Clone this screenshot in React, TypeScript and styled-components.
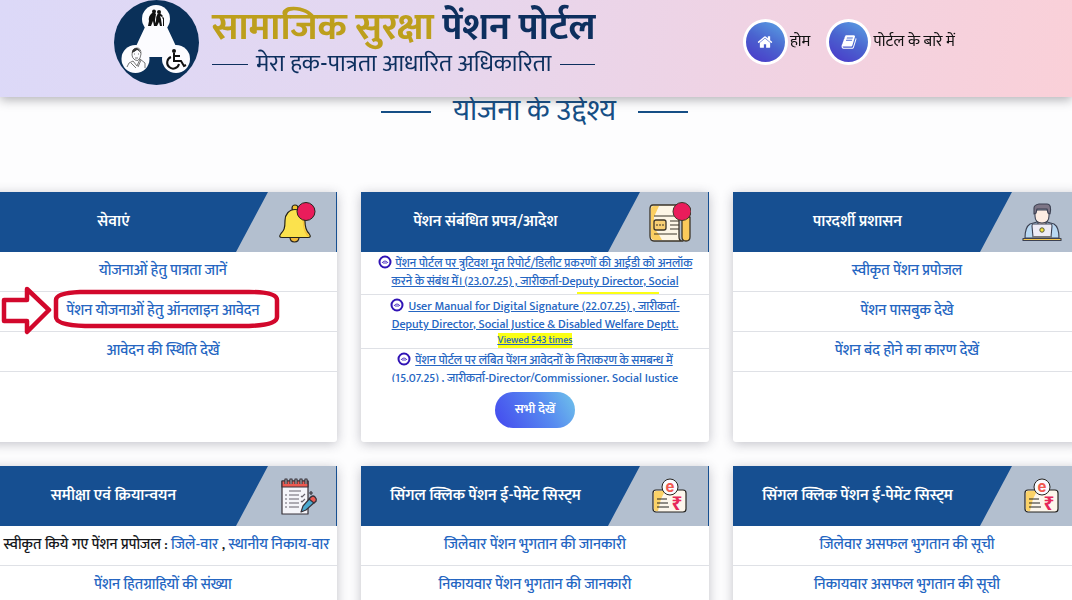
import React from "react";
import styled, { createGlobalStyle } from "styled-components";

const GlobalStyle = createGlobalStyle`
  * { box-sizing: border-box; }
  body {
    margin: 0;
    background: #fdfdfe;
    color: #16181c;
    font: 16px/24px "Mukta", "Noto Sans Devanagari", "Noto Sans", sans-serif;
    overflow-x: hidden;
  }
  a { color: #2566c2; text-decoration: none; }
`;

const Header = styled.header`
  position: sticky;
  top: 0;
  z-index: 5;
  display: flex;
  align-items: flex-start;
  justify-content: space-between;
  height: 97px;
  padding: 0 117px 0 114px;
  background: linear-gradient(100deg, #dcd9f8 0%, #e4d7f0 35%, #efd3e4 68%, #fad0d8 100%);
  box-shadow: 0 3px 10px rgba(40, 40, 50, 0.35);
`;

const Brand = styled.a`
  display: flex;
  gap: 13px;
`;

const BrandText = styled.span`
  display: flex;
  flex-direction: column;
  padding-top: 8px;
`;

const BrandName = styled.strong`
  color: #0d2f5e;
  font-size: 38px;
  line-height: 40px;
  font-weight: 700;
  white-space: nowrap;
`;

const Gold = styled.span`
  color: #bd9f1c;
`;

const Tagline = styled.span`
  display: flex;
  align-items: center;
  gap: 8px;
  color: #0d2f5e;
  font-size: 24px;
  line-height: 32px;
  white-space: nowrap;
  &::before,
  &::after {
    content: "";
    flex: 1;
    height: 1px;
    background: #0d2f5e;
  }
`;

const Nav = styled.nav`
  display: flex;
  gap: 16px;
  padding-top: 19px;
`;

const NavLink = styled.a`
  display: flex;
  align-items: center;
  gap: 2px;
  color: #111;
  line-height: 26px;
  white-space: nowrap;
`;

const NavBadge = styled.span`
  display: grid;
  place-items: center;
  width: 45px;
  height: 46px;
  border: 3px solid #fff;
  border-radius: 50%;
  background: linear-gradient(30deg, #4a35c8, #4a63cf 50%, #5aa4e4);
  svg { width: 16px; height: 16px; fill: #fff; }
`;

const SectionTitle = styled.h1`
  display: flex;
  align-items: center;
  justify-content: center;
  gap: 22px;
  margin: -8px 0 58px;
  padding-right: 3px;
  color: #164f86;
  font-size: 30px;
  line-height: 45px;
  font-weight: 400;
  &::before,
  &::after {
    content: "";
    width: 50px;
    height: 2px;
    background: #164f86;
  }
`;

const Grid = styled.main`
  display: grid;
  grid-template-columns: repeat(3, minmax(0, 1fr));
  gap: 24px;
  margin: 0 -9px 24px -11px;
`;

const Card = styled.section`
  min-height: 250px;
  background: #fff;
  border-radius: 3px;
  box-shadow: 0 2px 12px rgba(40, 40, 60, 0.28);
`;

const CardHead = styled.div`
  display: flex;
  height: 60px;
  padding-right: 1px;
  background: #164f91;
`;

const CardTitle = styled.h2`
  flex: 1;
  margin: 0;
  padding-left: 2px;
  color: #fff;
  font-size: 16px;
  line-height: 60px;
  font-weight: 600;
  text-align: center;
  white-space: nowrap;
`;

const IconPanel = styled.div`
  display: grid;
  place-items: center;
  width: 100px;
  padding: 2px 0 0 24px;
  background: #b3bfcf;
  clip-path: polygon(32px 0, 100% 0, 100% 100%, 0 100%);
  svg { width: 42px; height: 42px; }
`;

const List = styled.ul`
  margin: 0;
  padding: 0;
  list-style: none;
`;

const Row = styled.li`
  position: relative;
  height: 40px;
  border-bottom: 1px solid #dfe1e6;
  font-size: 15px;
  font-weight: 500;
  line-height: 38px;
  text-align: center;
  white-space: nowrap;
`;

const SplitRow = styled(Row)`
  padding-left: 7px;
`;

const ArrowMark = styled.svg`
  position: absolute;
  left: 12px;
  top: -9px;
  width: 280px;
  height: 52px;
  pointer-events: none;
`;

const Notices = styled.ul`
  height: 130px;
  margin: 0;
  padding: 0;
  overflow: hidden;
  list-style: none;
`;

const Notice = styled.li<{ $short?: boolean }>`
  height: ${(p) => (p.$short ? 43 : 54)}px;
  padding-top: 2px;
  overflow: hidden;
  border-bottom: 1px solid #dfe1e6;
  font-size: 12px;
  font-weight: 500;
  line-height: 18px;
  text-align: center;
  white-space: nowrap;
  a { text-decoration: underline; }
  svg { width: 14px; height: 14px; margin-right: 4px; vertical-align: -2px; }
`;

const Viewed = styled.span`
  display: table;
  margin: 0 auto;
  background: #fbff14;
  font-size: 10px;
  line-height: 15px;
  text-decoration: underline;
`;

const ViewedEdge = styled.span`
  display: block;
  width: 82px;
  height: 2px;
  margin: 2px 0 0 216px;
  background: #fbff14;
`;

const AllButton = styled.button`
  display: block;
  width: 80px;
  height: 36px;
  margin: 10px auto 0;
  padding: 0 0 3px;
  border: 0;
  border-radius: 18px;
  background: linear-gradient(60deg, #4348ee, #578af0 60%, #70c4ea);
  color: #fff;
  font: 600 13px/20px "Mukta", "Noto Sans Devanagari", "Noto Sans", sans-serif;
`;

const Logo = () => (
  <svg width="85" height="85" viewBox="0 0 85 85" aria-hidden="true">
    <circle cx="42.500" cy="42.500" r="42.500" fill="#0a3059" />
    <path d="M31 27H53L67 57H17Z" fill="#fcfcff" />
    <g fill="#fcfcff">
      <circle cx="42" cy="19" r="14" />
      <circle cx="21.500" cy="59" r="14" />
      <circle cx="62" cy="59" r="14" />
    </g>
    <g fill="#111">
      <circle cx="40" cy="11.500" r="2" />
      <circle cx="45" cy="12" r="2" />
      <path d="M38 13q-4 3-3 8l-1 5h3l2-5 1 5h2l-1-6 1-6-2-2zM43.500 14q-2 3-1.500 7l-1 5h2l2-4 1 4h2l-1-7-1-3 2 1 1-1-3-3z" />
      <path d="M48 18q2-1 1.500 1V26" fill="none" stroke="#111" />
    </g>
    <g fill="none" stroke="#111" strokeWidth="2">
      <path d="M60 53v8h7l3 5 2-1M60 56h6" />
      <path d="M57 57a6 6 0 1 0 8 7" />
    </g>
    <circle cx="60" cy="51" r="2" fill="#111" />
    <g fill="none" stroke="#555" strokeWidth="0.800">
      <path d="M18 55q0-7 5-7 4 0 4 6l-1 4q-2 4-5 2-3-2-3-5ZM18 52q3 0 5-3l4 4M13 67q1-5 6-6l4 5 3-7 5 4v5M17 63l5 5M20 54h1M24 54h1M21 58h3M27 60l-3 7" />
    </g>
    <path d="M18 53q0-5 5-5l4 3-4-1z" fill="#333" />
  </svg>
);

const HomeIcon = () => (
  <svg viewBox="0 0 1664 1792" aria-hidden="true">
    <path d="M1408 992v480q0 26-19 45t-45 19h-384v-384h-256v384h-384q-26 0-45-19t-19-45v-480q0-1 .5-3t.5-3l575-474 575 474q1 2 1 6zm223-69l-62 74q-8 9-21 11h-3q-13 0-21-7l-692-577-692 577q-12 8-24 7-13-2-21-11l-62-74q-8-10-7-23.500t11-21.500l719-599q32-26 76-26t76 26l244 204v-195q0-14 9-23t23-9h192q14 0 23 9t9 23v408l219 182q10 8 11 21.500t-7 23.500z" />
  </svg>
);

const BookIcon = () => (
  <svg viewBox="0 0 1664 1792" aria-hidden="true">
    <path d="M1639 478q40 57 18 129l-275 906q-19 64-76.500 107.500t-122.500 43.500h-923q-77 0-148.500-53.500t-99.500-131.500q-24-67-2-127 0-4 3-27t4-37q1-8-3-21.500t-3-19.500q2-11 8-21t16.500-23.500 16.500-23.500q23-38 45-91.500t30-91.500q3-10 .5-30t-.5-28q3-11 17-28t17-23q21-36 42-92t25-90q1-9-2.500-32t.5-28q4-13 22-30.500t22-22.500q19-26 42.500-84.500t27.500-96.500q1-8-3-25.500t-2-26.500q2-8 9-18t18-23 17-21q8-12 16.500-30.500t15-35 16-36 19.500-32 26.500-23.500 36-11.500 47.500 5.500l-1 3q38-9 51-9h761q74 0 114 56t18 130l-274 906q-36 119-71.500 153.500t-128.500 34.500h-869q-27 0-38 15-11 16-1 43 24 70 144 70h923q29 0 56-15.500t35-41.500l300-987q7-22 5-57 38 15 59 43zm-1064 2q-4 13 2 22.500t20 9.500h608q13 0 25.500-9.500t16.500-22.500l21-64q4-13-2-22.500t-20-9.500h-608q-13 0-25.500 9.500t-16.500 22.500zm-83 256q-4 13 2 22.500t20 9.500h608q13 0 25.500-9.500t16.500-22.500l21-64q4-13-2-22.500t-20-9.500h-608q-13 0-25.500 9.500t-16.500 22.500z" />
  </svg>
);

const BellIcon = () => (
  <svg viewBox="0 0 42 42" aria-hidden="true">
    <g stroke="#25231c" strokeWidth="1.2" strokeLinejoin="round">
      <circle cx="18" cy="6" r="3" fill="#f2c531" />
      <path d="M13 35q0 5 4.500 5t4.500-5z" fill="#f2b93b" />
      <path d="M18 7.500c-6 0-10 5-10 11 0 8-1 10-4 13q-3 4 1 4h26q4 0 1-4c-3-3-4-6-4-12 0-7-4-12-10-12Z" fill="#fbe24d" />
    </g>
    <path d="M23 13q3 3 3 9t4 12h1q2 0 0-2c-3-3-4-6-4-12 0-5-2-7-4-7Z" fill="#f7c23c" />
    <circle cx="29" cy="9.500" r="9" fill="#ea1c5b" stroke="#25231c" strokeWidth="1" />
  </svg>
);

const FormIcon = () => (
  <svg viewBox="0 0 42 42" aria-hidden="true">
    <g stroke="#3b3428" strokeWidth="1.300" strokeLinejoin="round">
      <path d="M4 3h29q-3 1-3 5v27q0 4 4 4H5q-4 0-4-5V7q0-4 3-4Z" fill="#fdf6e6" />
      <path d="M33 15h8v20q0 4-4 4t-4-4Z" fill="#fbc95a" />
    </g>
    <path d="M2 7q0-3 3-3h5L5 15v12q4 3 8 11H6q-4 0-4-4Z" fill="#fbcf62" />
    <rect x="5" y="18" width="12" height="10" rx="2" fill="#f8cf73" stroke="#3b3428" strokeWidth="1.300" />
    <path d="M5 14h20M21 19h9M21 23h9M21 27h9M5 32h23M7 23h2M10 23h2M13 23h2" stroke="#3b3428" strokeWidth="1.200" />
    <circle cx="33" cy="9.500" r="9" fill="#ea1c5b" stroke="#3b3428" />
  </svg>
);

const PersonIcon = () => (
  <svg viewBox="0 0 42 42" aria-hidden="true">
    <g stroke="#3c4152" strokeWidth="1.100" strokeLinejoin="round">
      <path d="M4 36q0-11 5-14l7-2h10l7 2q5 3 5 14Z" fill="#b9d8f2" />
      <path d="M17 17h8v6l-4 3-4-3Z" fill="#fbe1d0" />
      <path d="M14 8h14v6q0 7-7 7t-7-7Z" fill="#fdece2" />
      <path d="M13 12V6q0-3 5-4h8q5 0 3 10l-2-1-1-4H16l-1 4Z" fill="#7d7586" />
      <path d="M12 22h18q1 0 1 2l-1 11H12l-1-11q0-2 1-2Z" fill="#eeecf6" />
      <path d="M2 36.500h38v2H2Z" fill="#f8c84f" />
    </g>
    <path d="M12 34h19v2H12Z" fill="#77787c" />
    <circle cx="21" cy="28" r="2.200" fill="#f5e63c" stroke="#55563c" />
  </svg>
);

const NotepadIcon = () => (
  <svg viewBox="0 0 42 42" aria-hidden="true">
    <g stroke="#38323a" strokeWidth="1.200" strokeLinejoin="round">
      <path d="M5 5h26v33H5Z" fill="#f5f5fa" />
      <path d="M5 5h26v6H5Z" fill="#ec5a51" />
      <path d="M8 8V3h2v5M13 8V3h2v5M18 8V3h2v5M23 8V3h2v5M28 8V3h2v5" fill="#ddd" />
      <path d="M24 36l2-6 8-9 5 4-10 9Z" fill="#4ba9cf" />
      <path d="M34 21q2-2 4 0t1 4l-2 2-5-4Z" fill="#ec5a51" />
      <path d="M34 15v4M32 17h4" />
    </g>
    <path d="M12 15h12M8 19h2M12 19h10M8 23h2M12 23h10M8 27h2M12 27h10M8 31h2M12 31h10M24 20l1 1 3-3M24 25l1 1 3-3" stroke="#66636d" strokeWidth="1.200" fill="none" />
  </svg>
);

const PaymentIcon = () => (
  <svg viewBox="0 0 42 42" aria-hidden="true">
    <rect x="4" y="14" width="33" height="22" rx="3" fill="#fdf6ec" stroke="#25231f" strokeWidth="1.200" />
    <path d="M5 17q0-2 2-2h9l-4 8-3 12H7q-2 0-2-2Z" fill="#fbd268" />
    <path d="M8 23h10M8 27h11M8 31h12" stroke="#25231f" strokeWidth="1.200" />
    <text x="28" y="34" fill="#e6285a" fontFamily="Noto Sans" fontSize="19" fontWeight="700" textAnchor="middle">₹</text>
    <circle cx="21" cy="11" r="8" fill="#fafaff" stroke="#25231f" />
    <text x="21" y="16" fill="#f0584f" fontFamily="Inter" fontSize="15" fontWeight="700" textAnchor="middle">e</text>
  </svg>
);

const NewBadge = () => (
  <svg viewBox="0 0 14 14" aria-hidden="true">
    <circle cx="7" cy="7" r="5.500" fill="#fff" stroke="#3013b5" strokeWidth="2" />
    <path d="M4 8q1-2 3-2t3 2M5 8h4" fill="none" stroke="#5134c4" />
  </svg>
);

type Item = { text: string; marked?: boolean };

const LinkCard = ({ title, icon, items, children }: {
  title: string;
  icon: React.ReactNode;
  items?: Item[];
  children?: React.ReactNode;
}) => (
  <Card>
    <CardHead>
      <CardTitle>{title}</CardTitle>
      <IconPanel>{icon}</IconPanel>
    </CardHead>
    {items ? (
      <List>
        {children}
        {items.map((item) => (
          <Row key={item.text}>
            <a href="#">{item.text}</a>
            {item.marked && <Highlight />}
          </Row>
        ))}
      </List>
    ) : (
      children
    )}
  </Card>
);

const Highlight = () => (
  <ArrowMark viewBox="0 0 280 52" aria-hidden="true">
    <g fill="none" stroke="#d2082c" strokeWidth="4.500" strokeLinejoin="round">
      <path d="M3 17h23V6l22 21-22 22V38H3Z" />
      <path d="M79 9H248Q276 9 276 17V34Q276 42 248 43H84Q55 42 55 34V17Q55 10 79 9Z" />
    </g>
  </ArrowMark>
);

export default function App() {
  return (
    <>
      <GlobalStyle />
      <Header>
        <Brand href="#">
          <Logo />
          <BrandText>
            <BrandName><Gold>सामाजिक सुरक्षा</Gold> पेंशन पोर्टल</BrandName>
            <Tagline>मेरा हक-पात्रता आधारित अधिकारिता</Tagline>
          </BrandText>
        </Brand>
        <Nav>
          <NavLink href="#"><NavBadge><HomeIcon /></NavBadge>होम</NavLink>
          <NavLink href="#"><NavBadge><BookIcon /></NavBadge>पोर्टल के बारे में</NavLink>
        </Nav>
      </Header>
      <SectionTitle>योजना के उद्देश्य</SectionTitle>
      <Grid>
        <LinkCard
          title="सेवाएं"
          icon={<BellIcon />}
          items={[
            { text: "योजनाओं हेतु पात्रता जानें" },
            { text: "पेंशन योजनाओं हेतु ऑनलाइन आवेदन", marked: true },
            { text: "आवेदन की स्थिति देखें" },
          ]}
        />
        <LinkCard title="पेंशन संबंधित प्रपत्र/आदेश" icon={<FormIcon />}>
          <Notices>
            <Notice $short>
              <NewBadge />
              <a href="#">
                पेंशन पोर्टल पर त्रुटिवश मृत रिपोर्ट/डिलीट प्रकरणों की आईडी को अनलॉक<br />
                करने के संबंध में। (23.07.25) , जारीकर्ता-Deputy Director, Social
              </a>
              <ViewedEdge />
            </Notice>
            <Notice>
              <NewBadge />
              <a href="#">
                User Manual for Digital Signature (22.07.25) , जारीकर्ता-<br />
                Deputy Director, Social Justice &amp; Disabled Welfare Deptt.
                <Viewed>Viewed 543 times</Viewed>
              </a>
            </Notice>
            <Notice>
              <NewBadge />
              <a href="#">
                पेंशन पोर्टल पर लंबित पेंशन आवेदनों के निराकरण के समबन्ध में<br />
                (15.07.25) , जारीकर्ता-Director/Commissioner, Social Justice
              </a>
            </Notice>
          </Notices>
          <AllButton type="button">सभी देखें</AllButton>
        </LinkCard>
        <LinkCard
          title="पारदर्शी प्रशासन"
          icon={<PersonIcon />}
          items={[
            { text: "स्वीकृत पेंशन प्रपोजल" },
            { text: "पेंशन पासबुक देखे" },
            { text: "पेंशन बंद होने का कारण देखें" },
          ]}
        />
        <LinkCard
          title="समीक्षा एवं क्रियान्वयन"
          icon={<NotepadIcon />}
          items={[{ text: "पेंशन हितग्राहियों की संख्या" }]}
        >
          <SplitRow>
            स्वीकृत किये गए पेंशन प्रपोजल : <a href="#">जिले-वार</a> , <a href="#">स्थानीय निकाय-वार</a>
          </SplitRow>
        </LinkCard>
        <LinkCard
          title="सिंगल क्लिक पेंशन ई-पेमेंट सिस्ट्म"
          icon={<PaymentIcon />}
          items={[{ text: "जिलेवार पेंशन भुगतान की जानकारी" }, { text: "निकायवार पेंशन भुगतान की जानकारी" }]}
        />
        <LinkCard
          title="सिंगल क्लिक पेंशन ई-पेमेंट सिस्ट्म"
          icon={<PaymentIcon />}
          items={[{ text: "जिलेवार असफल भुगतान की सूची" }, { text: "निकायवार असफल भुगतान की सूची" }]}
        />
      </Grid>
    </>
  );
}
